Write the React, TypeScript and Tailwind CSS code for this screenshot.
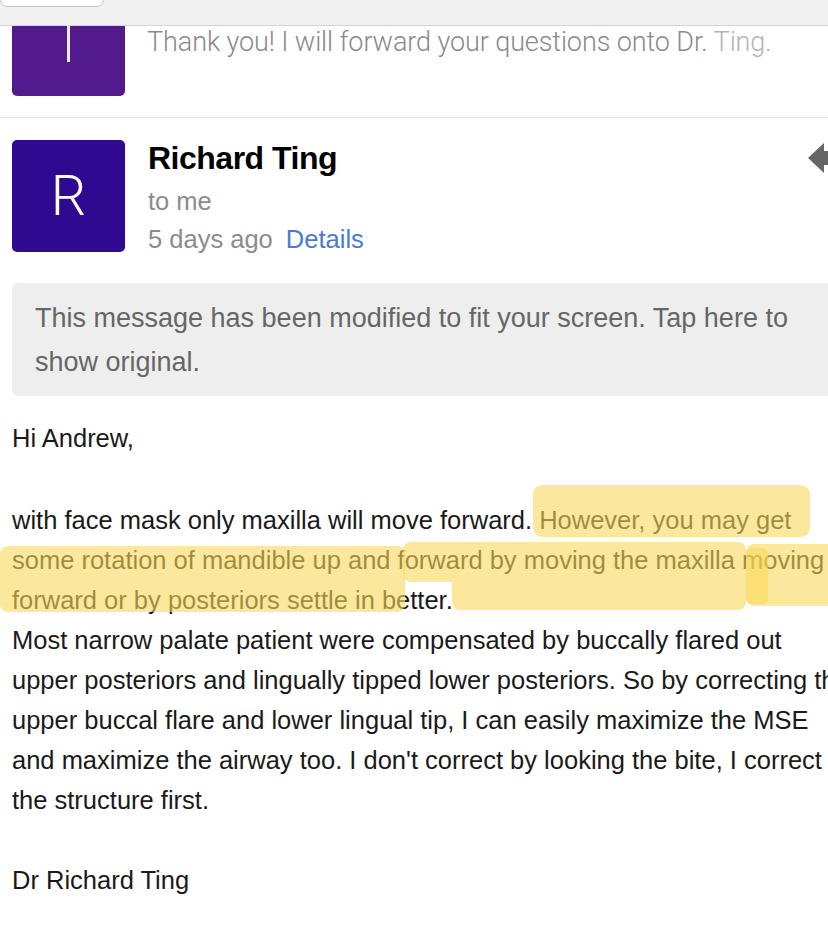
import React from 'react';

const font = "font-['Liberation_Sans','Helvetica_Neue',Arial,sans-serif]";

// Body text, broken where the screenshot breaks it
const bodyLines = [
    'Most narrow palate patient were compensated by buccally flared out',
    'upper posteriors and lingually tipped lower posteriors. So by correcting the',
    'upper buccal flare and lower lingual tip, I can easily maximize the MSE',
    "and maximize the airway too. I don't correct by looking the bite, I correct",
    'the structure first.',
];

const ReplyArrow: React.FC = () => (
    <svg width="40" height="34" viewBox="0 0 40 34" className="shrink-0">
        <path d="M0 17 L16 2 L16 10 L40 10 L40 24 L16 24 L16 32 Z" fill="#666666" />
    </svg>
);

const marker = 'absolute bg-[#f8d85a]/60 pointer-events-none';

const App: React.FC = () => {
    return (
        <div className={`${font} w-[828px] h-[951px] overflow-hidden bg-white`}>
            {/* Top toolbar */}
            <div className="h-[26px] bg-[#f1f1f1] border-b border-[#d4d4d4] relative">
                <div className="absolute left-0 top-[-10px] w-[104px] h-[17px] bg-white border border-[#c4c4c4] rounded-b-[7px]" />
            </div>

            {/* Previous message (scrolled) */}
            <div className="h-[92px] border-b border-[#e6e6e6] flex">
                <div className="ml-3 w-[113px] h-[70px] bg-[#521a8c] rounded-b-[5px] flex justify-center">
                    <div className="w-[3px] h-[36px] bg-white/90" />
                </div>
                <div className="ml-[22px] mt-[1px] text-[27px] leading-[30px] text-[#8a8a8a] font-['Roboto',sans-serif] font-light tracking-[-0.1px]">
                    Thank you! I will forward your questions onto Dr. <span className="text-[#b4b4b4]">Ting.</span>
                </div>
            </div>

            {/* Message header */}
            <div className="flex pt-[22px]">
                <div className="ml-3 w-[113px] h-[112px] bg-[#2f0a91] rounded-[5px] flex items-center justify-center">
                    <span className="text-white text-[56px] font-['Roboto',sans-serif] font-light leading-none">R</span>
                </div>
                <div className="ml-[23px] flex-1 flex flex-col">
                    <div className="text-[32px] font-bold leading-[36px] text-black tracking-[-0.5px]">Richard Ting</div>
                    <div className="mt-[6px] text-[25.5px] leading-[38px] text-[#8c8c8c]">to me</div>
                    <div className="text-[25.5px] leading-[38px] text-[#8c8c8c]">
                        5 days ago <span className="ml-[6px] text-[#4a7bd0]">Details</span>
                    </div>
                </div>
                <div className="mt-[1px] -mr-[20px]">
                    <ReplyArrow />
                </div>
            </div>

            {/* Modified notice */}
            <div className="ml-3 mt-[25px] -mr-2 bg-[#eeeeee] rounded-[6px] px-[23px] pt-[13px] pb-[12px] text-[27px] leading-[44px] text-[#666666]">
                This message has been modified to fit your screen. Tap here to
                <br />
                show original.
            </div>

            {/* Message body */}
            <div className="mt-[22px] pl-3 text-[25.5px] leading-[40px] text-[#1a1a1a] whitespace-nowrap">
                <div>Hi Andrew,</div>
                <div className="h-[42px]" />
                <div className="relative">
                    <div>
                        with face mask only maxilla will move forward. However, you may get
                    </div>
                    <div>some rotation of mandible up and forward by moving the maxilla moving</div>
                    <div>forward or by posteriors settle in better.</div>

                    {/* Highlighter strokes */}
                    <div className={`${marker} left-[521px] top-[-15px] w-[277px] h-[52px] rounded-[9px]`} />
                    <div className={`${marker} left-[-12px] top-[46px] w-[405px] h-[66px] rounded-[8px]`} />
                    <div className={`${marker} left-[391px] top-[42px] w-[343px] h-[40px] rounded-t-[8px] rounded-bl-[8px]`} />
                    <div className={`${marker} left-[440px] top-[82px] w-[294px] h-[28px] rounded-b-[8px]`} />
                    <div className={`${marker} left-[734px] top-[44px] w-[90px] h-[62px] rounded-[8px]`} />
                    <div className={`${marker} left-[734px] top-[48px] w-[22px] h-[56px] rounded-[6px]`} />
                </div>
                {bodyLines.map((line, i) => (
                    <div key={i}>{line}</div>
                ))}
                <div className="h-[40px]" />
                <div>Dr Richard Ting</div>
            </div>
        </div>
    );
};

export default App;
